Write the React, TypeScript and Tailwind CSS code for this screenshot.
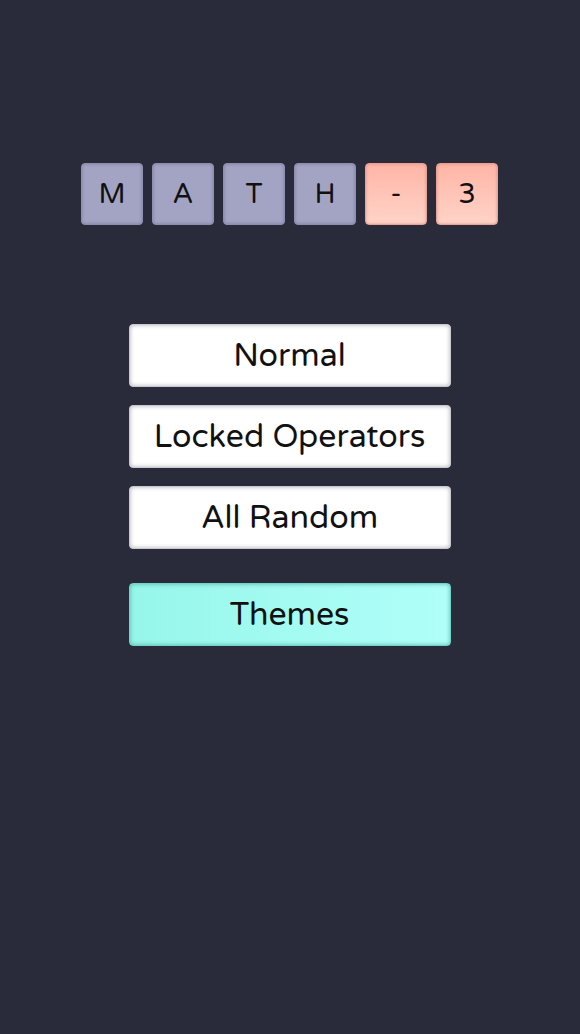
import React from "react";

const letters = ["M", "A", "T", "H"];

export default function App() {
  return (
    <div
      className="w-[580px] h-[1034px] bg-[#2a2b3a] flex flex-col items-center"
      style={{ fontFamily: '"Varela Round", Lato, "Noto Sans", sans-serif' }}
    >
      <div className="flex gap-[9px] mt-[163px] ml-[-1px]">
        {letters.map((l) => (
          <div
            key={l}
            className="w-[62px] h-[62px] rounded-[4px] bg-[#a3a4c4] border border-[#8e8fae] shadow-[inset_0_0_3px_rgba(80,80,110,0.5)] flex items-center justify-center text-[28px] text-[#111]"
          >
            {l}
          </div>
        ))}
        {["-", "3"].map((l) => (
          <div
            key={l}
            className="w-[62px] h-[62px] rounded-[4px] bg-gradient-to-b from-[#ffb5a6] to-[#ffd3c8] border border-[#e8a395] shadow-[inset_0_0_3px_rgba(180,100,90,0.5)] flex items-center justify-center text-[28px] text-[#111]"
          >
            {l}
          </div>
        ))}
      </div>

      <div className="flex flex-col gap-[18px] mt-[99px] ml-[-1px]">
        {["Normal", "Locked Operators", "All Random"].map((t) => (
          <div
            key={t}
            className="w-[322px] h-[63px] rounded-[4px] bg-white border border-[#c8c8d0] shadow-[inset_0_0_4px_rgba(120,120,140,0.6)] flex items-center justify-center text-[32px] text-[#111]"
          >
            {t}
          </div>
        ))}
        <div className="mt-[16px] w-[322px] h-[63px] rounded-[4px] bg-gradient-to-r from-[#96f6ea] to-[#b0fff9] border border-[#72d4c6] shadow-[inset_0_0_4px_rgba(40,140,130,0.6)] flex items-center justify-center text-[32px] text-[#111]">
          Themes
        </div>
      </div>
    </div>
  );
}
